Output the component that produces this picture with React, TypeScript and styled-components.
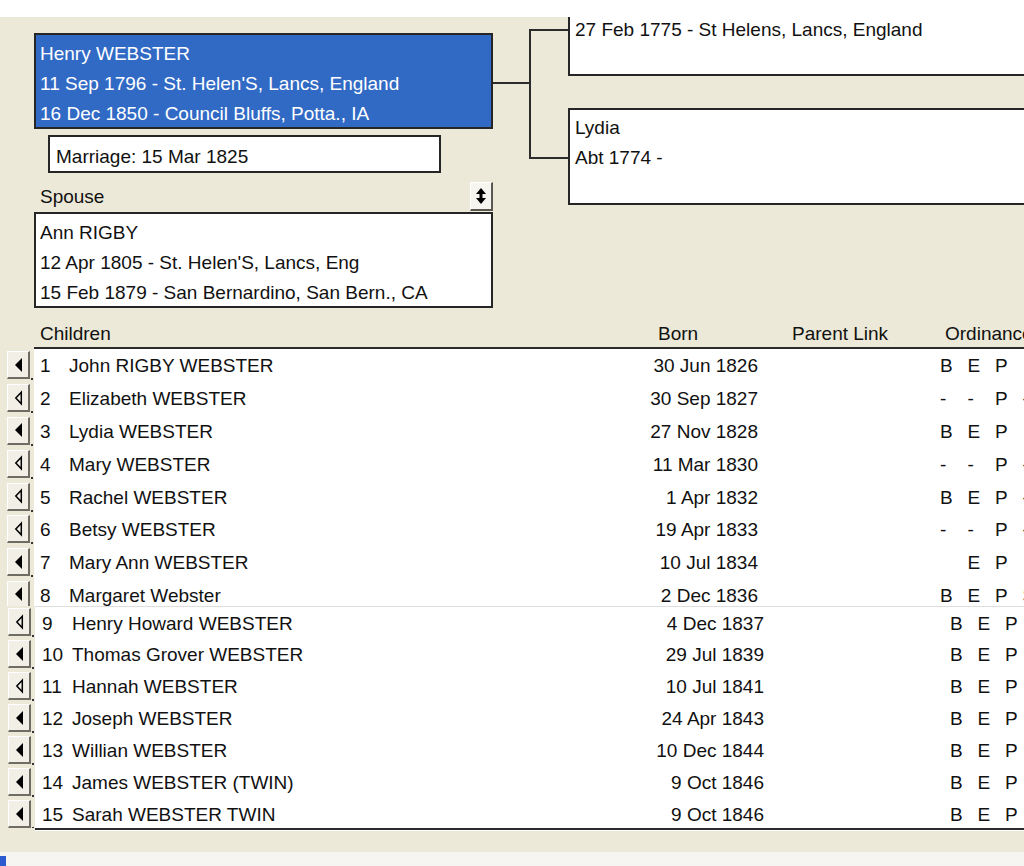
import React from "react";
import styled, { createGlobalStyle } from "styled-components";

const GlobalStyle = createGlobalStyle`
  html, body {
    margin: 0;
    padding: 0;
  }
  body {
    width: 1024px;
    height: 866px;
    overflow: hidden;
    background: #ece9d8;
    font-family: "Liberation Sans", Arial, sans-serif;
    font-size: 19px;
    color: #111;
  }
`;

const Screen = styled.div`
  width: 1024px;
  height: 866px;
  display: flex;
  flex-direction: column;
  overflow: hidden;
  background: #ece9d8;
`;

const TopStrip = styled.div`
  flex: none;
  height: 17px;
  background: #fff;
`;

const FamilyArea = styled.section`
  flex: none;
  height: 291px;
  display: flex;
`;

const LeftColumn = styled.div`
  flex: none;
  width: 459px;
  margin-left: 34px;
  padding-top: 16px;
  display: flex;
  flex-direction: column;
`;

const PersonBox = styled.div<{ $selected?: boolean }>`
  box-sizing: border-box;
  height: 96px;
  border: 2px solid #262626;
  padding: 4px 4px 2px;
  line-height: 30px;
  white-space: nowrap;
  background: ${(p) => (p.$selected ? "#316ac5" : "#fff")};
  color: ${(p) => (p.$selected ? "#fff" : "#111")};
`;

const MarriageBox = styled.div`
  box-sizing: border-box;
  width: 393px;
  height: 38px;
  margin: 6px 0 0 14px;
  border: 2px solid #262626;
  padding: 6px 6px 0;
  line-height: 28px;
  background: #fff;
`;

const SpouseHeader = styled.div`
  box-sizing: border-box;
  height: 39px;
  padding: 8px 0 0 6px;
  display: flex;
  align-items: center;
  justify-content: space-between;
`;

const ToggleButton = styled.button`
  box-sizing: border-box;
  width: 23px;
  height: 29px;
  padding: 0;
  display: flex;
  align-items: center;
  justify-content: center;
  background: #f6f5f0;
  border-style: solid;
  border-width: 1px 2px 2px 1px;
  border-color: #fff #5a5850 #5a5850 #fff;
`;

const Connector = styled.svg`
  flex: none;
  width: 75px;
  height: 291px;
`;

const RightColumn = styled.div`
  flex: 1;
  display: flex;
  flex-direction: column;
`;

const FatherBox = styled.div`
  box-sizing: border-box;
  height: 59px;
  background: #fff;
  border-left: 2px solid #262626;
  border-bottom: 2px solid #262626;
  padding: 1px 0 0 5px;
  line-height: 24px;
  white-space: nowrap;
`;

const MotherBox = styled.div`
  box-sizing: border-box;
  height: 97px;
  margin-top: 32px;
  background: #fff;
  border: 2px solid #262626;
  border-right: none;
  padding: 3px 5px 0;
  line-height: 30px;
  white-space: nowrap;
`;

const ChildrenHeader = styled.div`
  flex: none;
  box-sizing: border-box;
  height: 41px;
  margin-left: 34px;
  padding: 0 0 1px 6px;
  display: grid;
  grid-template-columns: 618px 134px 153px 1fr;
  align-items: end;
  line-height: 24px;
  white-space: nowrap;
  overflow: hidden;
  border-bottom: 2px solid #2b2b2b;
`;

const ChildBlock = styled.div<{ $height: number }>`
  flex: none;
  height: ${(p) => p.$height}px;
  overflow: hidden;
  display: flex;
  flex-direction: column;
`;

const Row = styled.div<{ $h: number; $left: number }>`
  flex: none;
  height: ${(p) => p.$h}px;
  display: flex;
  padding-left: ${(p) => p.$left}px;
`;

const ArrowButton = styled.button`
  position: relative;
  flex: none;
  box-sizing: border-box;
  width: 23px;
  height: 28px;
  margin-right: 4px;
  align-self: center;
  padding: 0;
  display: flex;
  align-items: center;
  justify-content: center;
  background: #f1efe6;
  border-style: solid;
  border-width: 1px 2px 2px 1px;
  border-color: #fff #6f6d63 #6f6d63 #fff;

  &::after {
    content: "";
    position: absolute;
    right: -5px;
    bottom: -3px;
    width: 2px;
    height: 2px;
    background: #333;
  }
`;

type Cols = { pad: number; num: number; name: number; born: number; link: number };

const RowBody = styled.div<{ $cols: Cols; $seam?: boolean }>`
  flex: 1;
  box-sizing: border-box;
  background: #fff;
  display: grid;
  grid-template-columns: ${(p) =>
    `${p.$cols.num}px ${p.$cols.name}px ${p.$cols.born}px ${p.$cols.link}px repeat(4, 27.5px)`};
  align-items: center;
  padding-left: ${(p) => p.$cols.pad}px;
  padding-top: 2px;
  white-space: nowrap;
  overflow: hidden;
  border-top: ${(p) => (p.$seam ? "1px solid #dedede" : "none")};
`;

const Born = styled.span`
  text-align: right;
`;

const Ord = styled.span`
  text-align: left;
`;

const ListEnd = styled.div`
  flex: none;
  height: 2px;
  margin-left: 35px;
  background: #2b2b2b;
  border-bottom: 1px solid #fff;
`;

const Spacer = styled.div`
  flex: 1;
`;

const Footer = styled.div`
  flex: none;
  height: 14px;
  background: #f6f5f1;
  display: flex;
  align-items: flex-end;
`;

const FooterMark = styled.div`
  width: 6px;
  height: 10px;
  background: #2c5bd0;
`;

type Child = {
  n: number;
  name: string;
  born: string;
  filled: boolean;
  ords: string[];
};

const firstBlock: Child[] = [
  { n: 1, name: "John RIGBY WEBSTER", born: "30 Jun 1826", filled: true, ords: ["B", "E", "P", ""] },
  { n: 2, name: "Elizabeth WEBSTER", born: "30 Sep 1827", filled: false, ords: ["-", "-", "P", "-"] },
  { n: 3, name: "Lydia WEBSTER", born: "27 Nov 1828", filled: true, ords: ["B", "E", "P", ""] },
  { n: 4, name: "Mary WEBSTER", born: "11 Mar 1830", filled: false, ords: ["-", "-", "P", "-"] },
  { n: 5, name: "Rachel WEBSTER", born: "1 Apr 1832", filled: false, ords: ["B", "E", "P", "-"] },
  { n: 6, name: "Betsy WEBSTER", born: "19 Apr 1833", filled: false, ords: ["-", "-", "P", "-"] },
  { n: 7, name: "Mary Ann WEBSTER", born: "10 Jul 1834", filled: true, ords: ["", "E", "P", ""] },
  { n: 8, name: "Margaret Webster", born: "2 Dec 1836", filled: true, ords: ["B", "E", "P", "S"] },
];

const secondBlock: Child[] = [
  { n: 9, name: "Henry Howard WEBSTER", born: "4 Dec 1837", filled: false, ords: ["B", "E", "P", ""] },
  { n: 10, name: "Thomas Grover WEBSTER", born: "29 Jul 1839", filled: true, ords: ["B", "E", "P", ""] },
  { n: 11, name: "Hannah WEBSTER", born: "10 Jul 1841", filled: false, ords: ["B", "E", "P", ""] },
  { n: 12, name: "Joseph WEBSTER", born: "24 Apr 1843", filled: true, ords: ["B", "E", "P", ""] },
  { n: 13, name: "Willian WEBSTER", born: "10 Dec 1844", filled: true, ords: ["B", "E", "P", ""] },
  { n: 14, name: "James WEBSTER (TWIN)", born: "9 Oct 1846", filled: true, ords: ["B", "E", "P", ""] },
  { n: 15, name: "Sarah WEBSTER TWIN", born: "9 Oct 1846", filled: true, ords: ["B", "E", "P", ""] },
];

const colsA: Cols = { pad: 6, num: 29, name: 520, born: 169, link: 182 };
const colsB: Cols = { pad: 7, num: 30, name: 520, born: 172, link: 186 };

function LeftArrow({ filled }: { filled: boolean }) {
  return (
    <svg width="10" height="16" viewBox="0 0 10 16">
      {filled ? (
        <polygon points="9,1 2,8 9,15" fill="#000" />
      ) : (
        <polygon points="8.3,2.2 2.8,8 8.3,13.8" fill="none" stroke="#000" strokeWidth="1.5" />
      )}
    </svg>
  );
}

function UpDownIcon() {
  return (
    <svg width="12" height="20" viewBox="0 0 12 20">
      <polygon points="1,8 6,2 11,8" fill="#000" />
      <rect x="4.5" y="8" width="3" height="4" fill="#000" />
      <polygon points="1,12 6,18 11,12" fill="#000" />
    </svg>
  );
}

function ChildRows({ kids, cols, h, left, seam }: { kids: Child[]; cols: Cols; h: number; left: number; seam?: boolean }) {
  return (
    <>
      {kids.map((k, i) => (
        <Row key={k.n} $h={h} $left={left}>
          <ArrowButton type="button">
            <LeftArrow filled={k.filled} />
          </ArrowButton>
          <RowBody $cols={cols} $seam={seam && i === 0}>
            <span>{k.n}</span>
            <span>{k.name}</span>
            <Born>{k.born}</Born>
            <span />
            {k.ords.map((o, j) => (
              <Ord key={j}>{o}</Ord>
            ))}
          </RowBody>
        </Row>
      ))}
    </>
  );
}

export default function App() {
  return (
    <Screen>
      <GlobalStyle />
      <TopStrip />
      <FamilyArea>
        <LeftColumn>
          <PersonBox $selected>
            <div>Henry WEBSTER</div>
            <div>11 Sep 1796 - St. Helen'S, Lancs, England</div>
            <div>16 Dec 1850 - Council Bluffs, Potta., IA</div>
          </PersonBox>
          <MarriageBox>Marriage: 15 Mar 1825</MarriageBox>
          <SpouseHeader>
            <span>Spouse</span>
            <ToggleButton type="button">
              <UpDownIcon />
            </ToggleButton>
          </SpouseHeader>
          <PersonBox>
            <div>Ann RIGBY</div>
            <div>12 Apr 1805 - St. Helen'S, Lancs, Eng</div>
            <div>15 Feb 1879 - San Bernardino, San Bern., CA</div>
          </PersonBox>
        </LeftColumn>
        <Connector viewBox="0 0 75 291">
          <g stroke="#2b2b2b" strokeWidth="2" fill="none">
            <line x1="0" y1="66" x2="38" y2="66" />
            <line x1="37" y1="12" x2="37" y2="142" />
            <line x1="36" y1="13" x2="75" y2="13" />
            <line x1="36" y1="141" x2="75" y2="141" />
          </g>
        </Connector>
        <RightColumn>
          <FatherBox>27 Feb 1775 - St Helens, Lancs, England</FatherBox>
          <MotherBox>
            <div>Lydia</div>
            <div>Abt 1774 -</div>
          </MotherBox>
        </RightColumn>
      </FamilyArea>
      <ChildrenHeader>
        <span>Children</span>
        <span>Born</span>
        <span>Parent Link</span>
        <span>Ordinances</span>
      </ChildrenHeader>
      <ChildBlock $height={257}>
        <ChildRows kids={firstBlock} cols={colsA} h={32.8} left={7} />
      </ChildBlock>
      <ChildBlock $height={222}>
        <ChildRows kids={secondBlock} cols={colsB} h={32} left={8} seam />
      </ChildBlock>
      <ListEnd />
      <Spacer />
      <Footer>
        <FooterMark />
      </Footer>
    </Screen>
  );
}
